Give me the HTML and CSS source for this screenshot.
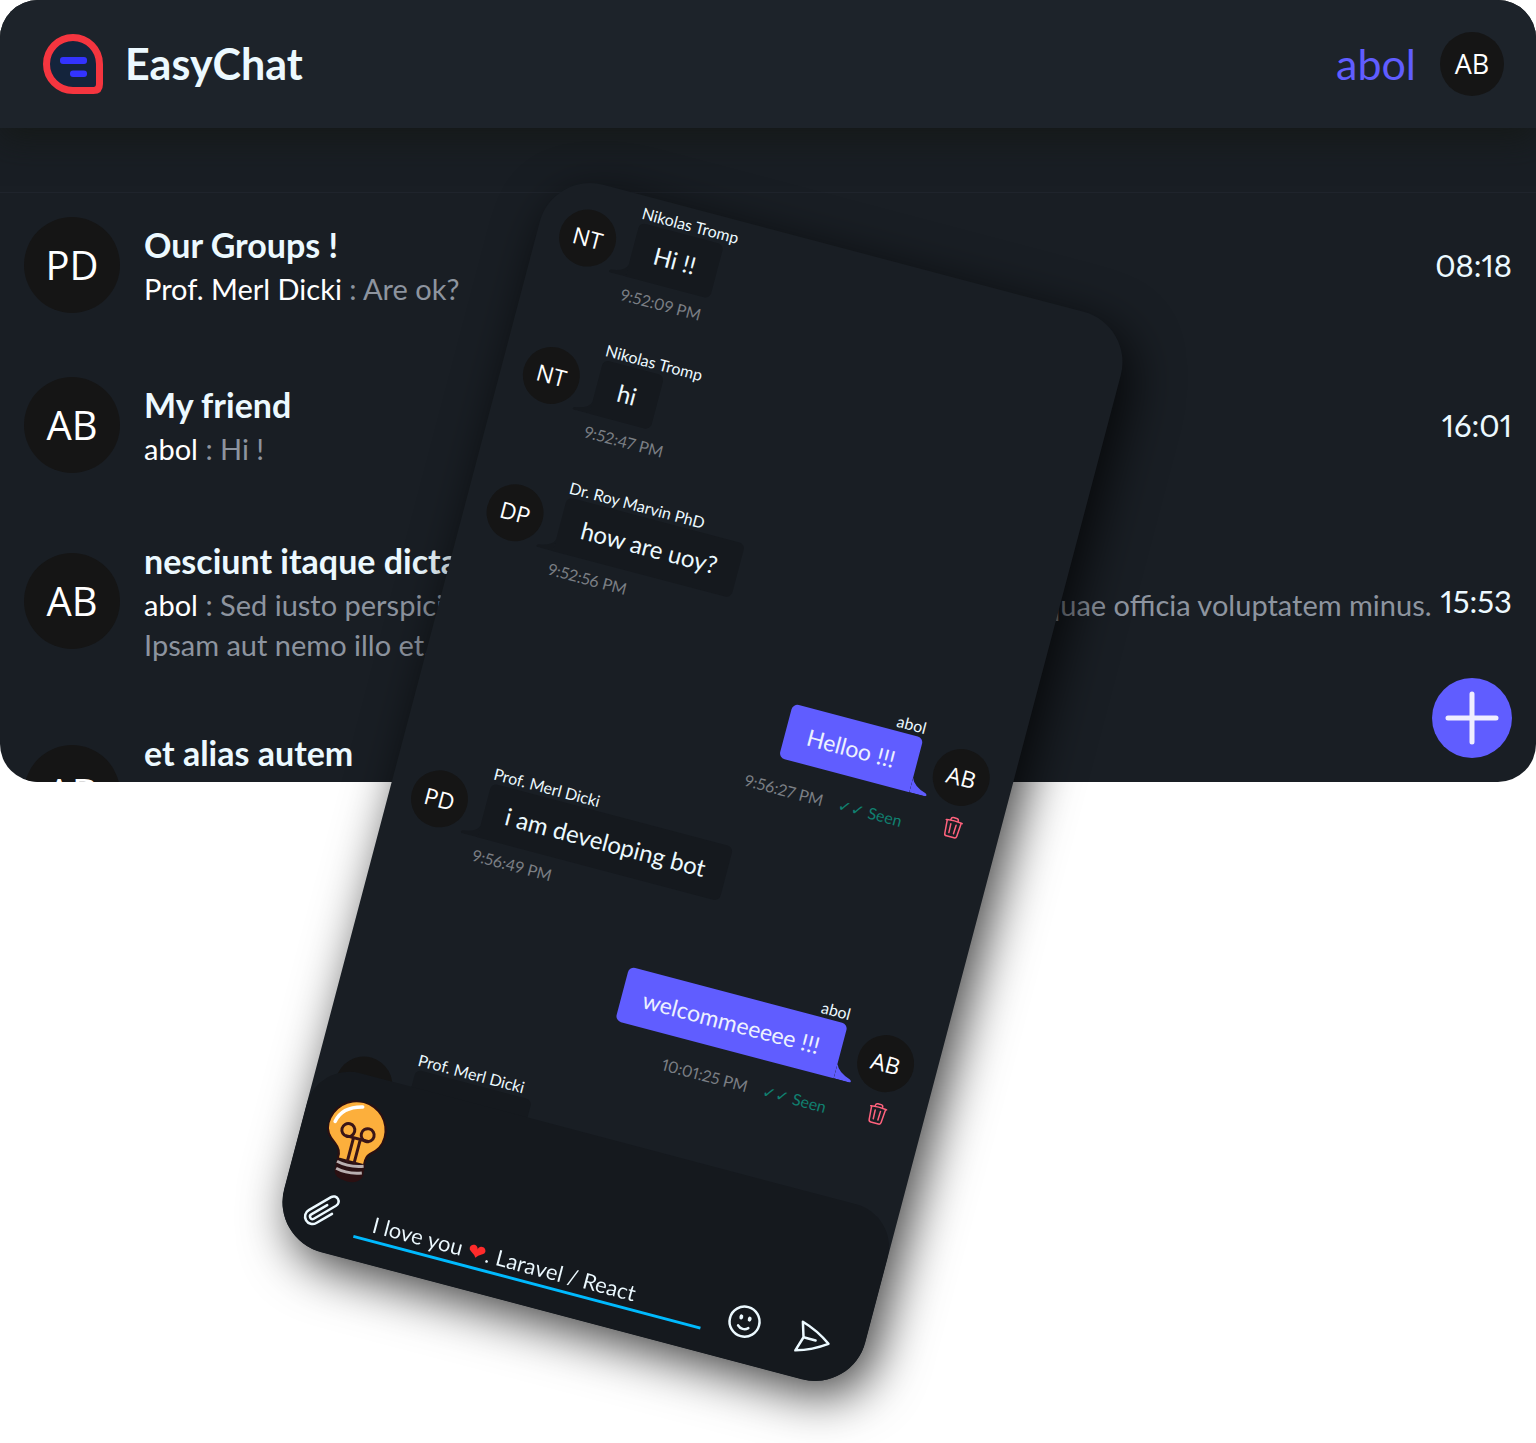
FILE: index.html
```html
<!DOCTYPE html>
<html lang="en">
<head>
<meta charset="utf-8">
<meta name="viewport" content="width=device-width, initial-scale=1">
<title>EasyChat</title>
<link rel="stylesheet" href="styles.css">
</head>
<body>
<main class="stage">
  <section class="app">
    <header class="topbar">
      <a class="brand" href="#">
        <svg class="logo" viewBox="0 0 60 60" aria-hidden="true">
          <path d="M30 3.500A26.500 26.500 0 1 0 30 56.500H50.500Q56.500 56.500 56.500 50V30A26.500 26.500 0 0 0 30 3.500Z" fill="#14243c" stroke="#f5353f" stroke-width="7"/>
          <rect x="17" y="23" width="27" height="7" rx="3" fill="#3333ff"/>
          <rect x="27" y="36.500" width="17" height="6.500" rx="3" fill="#3333ff"/>
        </svg>
        <h1 class="brand-name">EasyChat</h1>
      </a>
      <div class="account">
        <a class="account-name" href="#">abol</a>
        <span class="avatar avatar-md">AB</span>
      </div>
    </header>
    <div class="strip"></div>
    <ul class="chats">
      <li class="chat">
        <span class="avatar avatar-lg">PD</span>
        <div class="chat-text">
          <h2 class="chat-title">Our Groups !</h2>
          <p class="chat-last"><span class="who">Prof. Merl Dicki</span> : Are ok?</p>
        </div>
        <time class="chat-time">08:18</time>
      </li>
      <li class="chat">
        <span class="avatar avatar-lg">AB</span>
        <div class="chat-text">
          <h2 class="chat-title">My friend</h2>
          <p class="chat-last"><span class="who">abol</span> : Hi !</p>
        </div>
        <time class="chat-time">16:01</time>
      </li>
      <li class="chat">
        <span class="avatar avatar-lg">AB</span>
        <div class="chat-text">
          <h2 class="chat-title">nesciunt itaque dicta</h2>
          <p class="chat-last"><span class="who">abol</span> : Sed iusto perspiciatis est aut quia dolorem et sint ut nulla a modi quae officia voluptatem minus. Ipsam aut nemo illo et.</p>
        </div>
        <time class="chat-time">15:53</time>
      </li>
      <li class="chat">
        <span class="avatar avatar-lg">AB</span>
        <div class="chat-text chat-text-tall">
          <h2 class="chat-title">et alias autem</h2>
        </div>
      </li>
    </ul>
    <button class="fab" type="button" aria-label="New chat">
      <svg viewBox="0 0 80 80" aria-hidden="true"><path d="M40 16V64M16 40H64" stroke="#efeeff" stroke-width="5" stroke-linecap="round"/></svg>
    </button>
  </section>

  <section class="phone">
    <div class="messages">
      <article class="msg">
        <span class="avatar avatar-sm">NT</span>
        <h3 class="msg-name">Nikolas Tromp</h3>
        <p class="bubble">Hi !!<svg class="tail" viewBox="0 0 18 20"><path d="M18 8V20H2Q-1 19 2 17Q16 15 18 8Z"/></svg></p>
        <div class="msg-foot"><time>9:52:09 PM</time></div>
      </article>
      <article class="msg">
        <span class="avatar avatar-sm">NT</span>
        <h3 class="msg-name">Nikolas Tromp</h3>
        <p class="bubble">hi<svg class="tail" viewBox="0 0 18 20"><path d="M18 8V20H2Q-1 19 2 17Q16 15 18 8Z"/></svg></p>
        <div class="msg-foot"><time>9:52:47 PM</time></div>
      </article>
      <article class="msg">
        <span class="avatar avatar-sm">DP</span>
        <h3 class="msg-name">Dr. Roy Marvin PhD</h3>
        <p class="bubble">how are uoy?<svg class="tail" viewBox="0 0 18 20"><path d="M18 8V20H2Q-1 19 2 17Q16 15 18 8Z"/></svg></p>
        <div class="msg-foot"><time>9:52:56 PM</time></div>
      </article>
      <article class="msg mine">
        <span class="avatar avatar-sm">AB</span>
        <h3 class="msg-name">abol</h3>
        <p class="bubble">Helloo !!!<svg class="tail" viewBox="0 0 18 20"><path d="M0 5V20H16Q19 19 16 17Q3 13 0 5Z"/></svg></p>
        <div class="msg-foot"><time>9:56:27 PM</time><span class="seen">✓✓ Seen</span></div>
        <button class="trash" type="button" aria-label="Delete message">
          <svg viewBox="0 0 24 24" aria-hidden="true"><path d="M14.740 9L14.394 18M9.606 18L9.260 9M19.228 5.790Q19.740 5.870 20.250 5.960M19.228 5.790L18.160 19.673A2.250 2.250 0 0 1 15.916 21.750H8.084A2.250 2.250 0 0 1 5.840 19.673L4.772 5.790M4.772 5.790Q4.260 5.870 3.750 5.960M4.772 5.790Q12 4.800 19.228 5.790M15.750 5.390V4.477Q15.700 2.300 13.660 2.276Q12 2.220 10.340 2.276Q8.300 2.300 8.250 4.477V5.390"/></svg>
        </button>
      </article>
      <article class="msg">
        <span class="avatar avatar-sm">PD</span>
        <h3 class="msg-name">Prof. Merl Dicki</h3>
        <p class="bubble">i am developing bot<svg class="tail" viewBox="0 0 18 20"><path d="M18 8V20H2Q-1 19 2 17Q16 15 18 8Z"/></svg></p>
        <div class="msg-foot"><time>9:56:49 PM</time></div>
      </article>
      <article class="msg mine">
        <span class="avatar avatar-sm">AB</span>
        <h3 class="msg-name">abol</h3>
        <p class="bubble">welcommeeeee !!!<svg class="tail" viewBox="0 0 18 20"><path d="M0 5V20H16Q19 19 16 17Q3 13 0 5Z"/></svg></p>
        <div class="msg-foot"><time>10:01:25 PM</time><span class="seen">✓✓ Seen</span></div>
        <button class="trash" type="button" aria-label="Delete message">
          <svg viewBox="0 0 24 24" aria-hidden="true"><path d="M14.740 9L14.394 18M9.606 18L9.260 9M19.228 5.790Q19.740 5.870 20.250 5.960M19.228 5.790L18.160 19.673A2.250 2.250 0 0 1 15.916 21.750H8.084A2.250 2.250 0 0 1 5.840 19.673L4.772 5.790M4.772 5.790Q4.260 5.870 3.750 5.960M4.772 5.790Q12 4.800 19.228 5.790M15.750 5.390V4.477Q15.700 2.300 13.660 2.276Q12 2.220 10.340 2.276Q8.300 2.300 8.250 4.477V5.390"/></svg>
        </button>
      </article>
      <article class="msg">
        <span class="avatar avatar-sm">PD</span>
        <h3 class="msg-name">Prof. Merl Dicki</h3>
        <p class="bubble">are ok?<svg class="tail" viewBox="0 0 18 20"><path d="M18 8V20H2Q-1 19 2 17Q16 15 18 8Z"/></svg></p>
      </article>
    </div>

    <form class="composer">
      <svg class="bulb" viewBox="0 0 60 82" aria-hidden="true">
        <path d="M17 60Q17 52 12 48Q-1 41 -1 29A30 30 0 0 1 59 29Q59 41 49 49Q45 53 46 59L47 72Q45 81 32 81Q18 81 18 72Z" fill="#2a1012"/>
        <path d="M19 60Q20 52 12 46Q1 39 1 29A28 28 0 0 1 57 29Q57 41 47 48Q43 52 44 60Z" fill="#fcaf3c"/>
        <path d="M6 26Q9 10 29 5" fill="none" stroke="#fff" stroke-width="3.500" stroke-linecap="round"/>
        <path d="M28 62V37M35 62V37M20 37H44" stroke="#3a1517" stroke-width="3" fill="none"/>
        <circle cx="21" cy="31" r="6.500" fill="none" stroke="#3a1517" stroke-width="3"/>
        <circle cx="41" cy="31" r="6.500" fill="none" stroke="#3a1517" stroke-width="3"/>
        <path d="M18 64Q31 67 45 62M19 71Q31 74 45 69" stroke="#b9afb0" stroke-width="3" fill="none"/>
      </svg>
      <div class="composer-row">
        <button class="tool" type="button" aria-label="Attach a file">
          <svg viewBox="0 0 24 24" aria-hidden="true"><path d="M18.375 12.739L10.682 20.432A4.500 4.500 0 0 1 4.318 14.068L15.258 3.128A3 3 0 1 1 19.500 7.371L8.552 18.320A1.500 1.500 0 0 1 6.430 16.198L14.250 8.379"/></svg>
        </button>
        <input class="field" type="text" aria-label="Message" value="I love you ❤. Laravel / React">
        <button class="tool" type="button" aria-label="Emoji">
          <svg viewBox="0 0 24 24" aria-hidden="true"><path d="M15.182 15.182A4.500 4.500 0 0 1 8.818 15.182M21 12A9 9 0 1 1 3 12A9 9 0 0 1 21 12Z"/><ellipse cx="9.400" cy="9.750" rx=".4" ry=".8"/><ellipse cx="14.600" cy="9.750" rx=".4" ry=".8"/></svg>
        </button>
        <button class="tool" type="submit" aria-label="Send">
          <svg viewBox="0 0 24 24" aria-hidden="true"><path d="M6 12L3.269 3.125A59.769 59.769 0 0 1 21.485 12A59.768 59.768 0 0 1 3.270 20.875L5.999 12ZM6 12H13.500"/></svg>
        </button>
      </div>
    </form>
  </section>
</main>
</body>
</html>
```
FILE: styles.css
```css
* {
  box-sizing: border-box;
  margin: 0;
  padding: 0;
}

body {
  background: #fff;
  color: #ecf9ff;
  font-family: Lato, "DejaVu Sans", sans-serif;
}

button {
  border: 0;
  background: none;
  cursor: pointer;
}

svg {
  display: block;
}

time {
  font-variant-numeric: proportional-nums;
}

.stage {
  position: relative;
  min-height: 100vh;
  overflow: hidden;
}

/* Chat list window */
.app {
  position: relative;
  aspect-ratio: 1536 / 782;
  min-height: 0;
  overflow: hidden;
  border-radius: 38px;
  background: #191e24;
}

.topbar {
  display: flex;
  align-items: center;
  justify-content: space-between;
  height: 128px;
  padding: 0 32px 0 43px;
  background: #1d232a;
  box-shadow: 0 10px 32px rgba(20, 24, 20, .8);
}

.brand {
  display: flex;
  align-items: center;
  gap: 22px;
  color: inherit;
  text-decoration: none;
}

.logo {
  width: 60px;
  height: 60px;
}

.brand-name {
  font-size: 43px;
  line-height: 48px;
  font-weight: 700;
}

.account {
  display: flex;
  align-items: center;
  gap: 24px;
}

.account-name {
  color: #605dff;
  font-size: 43px;
  line-height: 48px;
  text-decoration: none;
}

.avatar {
  display: flex;
  flex: none;
  align-items: center;
  justify-content: center;
  padding-bottom: 2px;
  border-radius: 50%;
  background: #151515;
  color: #fff;
  font-family: "Open Sans", sans-serif;
}

.avatar-lg {
  width: 96px;
  height: 96px;
  font-size: 40px;
}

.avatar-md {
  width: 64px;
  height: 64px;
  font-size: 27px;
}

.avatar-sm {
  width: 57px;
  height: 57px;
  font-size: 23px;
}

.strip {
  height: 65px;
  border-bottom: 1px solid #1f242c;
}

.chats {
  display: flex;
  flex-direction: column;
  gap: 16px;
  list-style: none;
}

.chat {
  display: flex;
  align-items: center;
  gap: 24px;
  padding: 24px;
}

.chat-text {
  flex: 1;
  min-width: 0;
}

.chat-text-tall {
  min-height: 128px;
}

.chat-title {
  font-size: 34px;
  line-height: 48px;
  font-weight: 700;
}

.chat-last {
  margin-right: -20px;
  color: #8d949f;
  font-size: 29px;
  line-height: 40px;
}

.who {
  color: #fff;
}

.chat-time {
  font-size: 31px;
  line-height: 40px;
}

.fab {
  position: absolute;
  right: 24px;
  bottom: 24px;
  width: 80px;
  height: 80px;
  border-radius: 50%;
  background: #605dff;
}

/* Conversation window, tilted over the list */
.phone {
  position: absolute;
  top: 230px;
  left: 402px;
  display: grid;
  width: 601px;
  aspect-ratio: 601 / 1104;
  overflow: hidden;
  border-radius: 52px;
  background: #191e24;
  box-shadow: 12px 12px 50px rgba(0, 0, 0, .75);
  transform: rotate(14.8deg);
}

.messages,
.composer {
  grid-area: 1 / 1;
}

.messages {
  min-height: 0;
  padding: 7px 23px 0 22px;
}

.msg {
  display: grid;
  grid-template-columns: 57px 1fr;
  grid-template-rows: 20px 56px auto;
  column-gap: 18px;
  justify-items: start;
  padding-bottom: 38px;
}

.msg .avatar {
  grid-area: 2 / 1;
}

.msg-name {
  grid-area: 1 / 2;
  font-size: 16px;
  line-height: 20px;
  font-weight: 400;
}

.bubble {
  position: relative;
  grid-area: 2 / 2;
  padding: 0 22px;
  border-radius: 6px 6px 6px 0;
  background: #15191e;
  font-size: 24px;
  line-height: 56px;
}

.tail {
  position: absolute;
  right: 100%;
  bottom: 0;
  width: 18px;
  height: 20px;
  fill: #15191e;
}

.msg-foot {
  display: flex;
  grid-area: 3 / 2;
  gap: 16px;
  margin-top: 8px;
  color: #7b7f84;
  font-size: 16px;
  line-height: 20px;
}

.mine {
  grid-template-columns: 1fr 57px;
  justify-items: end;
}

.mine .avatar {
  grid-area: 2 / 2;
}

.mine .msg-name {
  grid-area: 1 / 1;
}

.mine .bubble {
  grid-area: 2 / 1;
  border-radius: 6px 6px 0 6px;
  background: #605dff;
  color: #edf1fe;
  font-size: 23px;
}

.mine .tail {
  right: auto;
  left: 100%;
  fill: #605dff;
}

.mine .msg-foot {
  grid-area: 3 / 1;
  margin-top: 20px;
}

.seen {
  color: #108070;
}

.trash {
  grid-area: 3 / 2;
  width: 24px;
  height: 24px;
  margin: 11px 12px 0 0;
}

.trash svg {
  fill: none;
  stroke: #ff627d;
  stroke-width: 1.500;
  stroke-linecap: round;
}

.composer {
  position: relative;
  align-self: end;
  padding: 27px 31px 13px 22px;
  border-radius: 44px 44px 0 0;
  background: #15191e;
}

.bulb {
  width: 60px;
  height: 82px;
  margin: 0 0 4px 4px;
}

.composer-row {
  display: flex;
  align-items: center;
  height: 57px;
}

.tool {
  flex: none;
  width: 40px;
  height: 40px;
}

.tool svg {
  fill: none;
  stroke: #ecf9ff;
  stroke-width: 1.500;
  stroke-linecap: round;
  stroke-linejoin: round;
}

.field {
  flex: 1;
  min-width: 0;
  height: 38px;
  margin: 0 21px 0 17px;
  padding: 4px 16px 0;
  border: 0;
  border-bottom: 3px solid #00bafe;
  outline: 0;
  background: linear-gradient(90deg, #ecf9ff 112px, #ff2b2b 112px, #ff2b2b 132px, #ecf9ff 132px);
  background-clip: text;
  color: transparent;
  font: inherit;
  font-size: 22px;
}

.tool + .tool {
  margin-left: 31px;
}
```
